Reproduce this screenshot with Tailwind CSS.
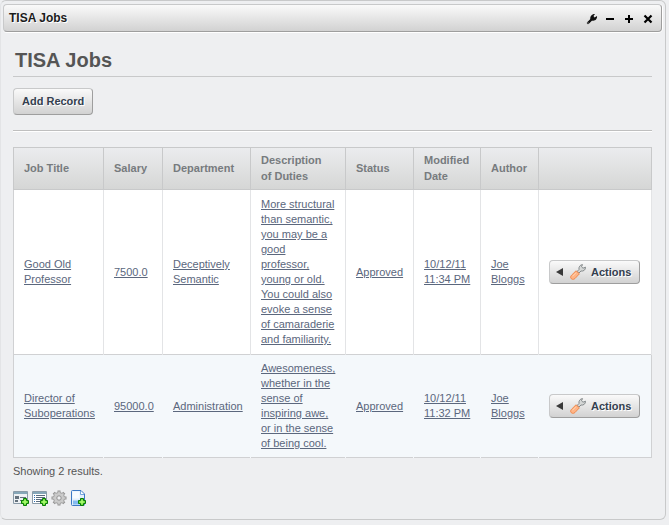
<!DOCTYPE html>
<html lang="en">
<head>
<meta charset="utf-8">
<meta name="viewport" content="width=device-width, initial-scale=1">
<title>TISA Jobs</title>
<script src="https://cdn.jsdelivr.net/npm/@tailwindcss/browser@4"></script>
</head>
<body class="bg-[#eeeff1] font-['Liberation_Sans',Arial,sans-serif] text-[11px] leading-[15px] text-[#555]">

<!-- Shared drawing for the two Actions buttons -->
<svg class="hidden" aria-hidden="true">
  <symbol id="spanner" viewBox="0 0 16 16">
    <path d="M7 7.500 9 5.500C8.500 3 10 .8 12.500 .6L11.500 2.800 13 4.200 15.500 3.200C15.500 6 13.500 7.500 11 7L9 9z" fill="#d5d7d6" stroke="#858a8c" stroke-width="1"/>
    <path d="M6 6.800 9.400 9.800 5 14.500C3.500 16 .8 15.500 .6 13.300 .6 12.400 1 11.800 1.600 11.200z" fill="#ffb485" stroke="#ef8b50" stroke-width="1"/>
    <path d="M6 8.800 2.500 12.300" stroke="#ffd3b0" stroke-width="1"/>
  </symbol>
  <symbol id="plus" viewBox="0 0 8 8">
    <path d="M2.500 .5h3v2h2v3h-2v2h-3v-2h-2v-3h2z" fill="#6fe03c" stroke="#087a06"/>
    <path d="M4 2v4M2 4h4" stroke="#b8ff7c"/>
  </symbol>
</svg>

<main class="mr-[3px] rounded-md border border-[#c8c9ca] border-l-[#e3e4e6] pb-[13px]">
  <header class="mx-[2px] mr-[3px] mt-[3px] flex h-[28px] items-center justify-between rounded border border-[#c8c9ca] border-r-[#9e9e9e] border-b-[#9e9e9e] bg-linear-to-b from-[#fafafa] to-[#d2d2d2] pl-[5px] pr-[5px] shadow-[0_1px_0_#fff,1px_0_0_#fff]">
    <h2 class="text-[12px] font-bold text-[#1b1b1b] [text-shadow:1px_1px_#fff]">TISA Jobs</h2>
    <div class="flex gap-[3px]">
      <button type="button" aria-label="Configuration" class="size-4"><svg viewBox="0 0 16 16" class="size-4"><path d="M5 13 9.500 8.500" stroke="#111" stroke-width="2.400" stroke-linecap="round"/><path d="M7.500 9.500C6.500 6.500 9 3.800 12 4L10.500 6 11.500 7.500 14 6C14.500 9 12 11.500 9 10.500z" fill="#111"/><path d="M4.500 13h1" stroke="#ccc"/></svg></button>
      <button type="button" aria-label="Minimize" class="size-4"><svg viewBox="0 0 16 16" class="size-4"><path d="M4 9h8" stroke="#000" stroke-width="2"/></svg></button>
      <button type="button" aria-label="Maximize" class="size-4"><svg viewBox="0 0 16 16" class="size-4"><path d="M4 9h8M8 5v8" stroke="#000" stroke-width="2"/></svg></button>
      <button type="button" aria-label="Remove" class="size-4"><svg viewBox="0 0 16 16" class="size-4"><path d="M4.500 5.500l7 7M11.500 5.500l-7 7" stroke="#000" stroke-width="2.200"/></svg></button>
    </div>
  </header>

  <div class="pl-[12px] pr-[13px]">
    <h1 class="mt-[15px] border-b border-[#c8c9ca] px-[2px] pb-[3px] text-[20px] font-bold leading-[26px] text-[#555]">TISA Jobs</h1>

    <button type="button" class="mt-[11px] block h-[27px] rounded border border-[#c8c9ca] border-r-[#9e9e9e] border-b-[#9e9e9e] bg-linear-to-b from-[#fafafa] to-[#d2d2d2] px-2 font-bold text-[#34404f] [text-shadow:1px_1px_#fff]">Add Record</button>

    <hr class="mt-[15px] border-[#bfbfbf] shadow-[0_1px_#fff]">

    <table class="mt-[16px] w-full table-fixed border-collapse border border-[#d0d1d3] bg-white text-left">
      <colgroup>
        <col class="w-[90px]"><col class="w-[59px]"><col class="w-[88px]"><col class="w-[95px]"><col class="w-[68px]"><col class="w-[67px]"><col class="w-[58px]"><col>
      </colgroup>
      <thead class="bg-linear-to-b from-[#ebecee] to-[#d5d6d5] leading-[16px] text-[#777b7e] [&_th]:border [&_th]:border-[#c8c9ca] [&_th]:pt-[4px] [&_th]:pb-[5px] [&_th]:pl-[10px]">
        <tr>
          <th scope="col">Job Title</th>
          <th scope="col">Salary</th>
          <th scope="col">Department</th>
          <th scope="col">Description<br>of Duties</th>
          <th scope="col">Status</th>
          <th scope="col">Modified<br>Date</th>
          <th scope="col">Author</th>
          <th scope="col" aria-label="Actions"></th>
        </tr>
      </thead>
      <tbody class="text-[#5b677d] [&_a]:underline [&_td]:pl-[10px]">
        <tr class="[&_td]:border-r [&_td]:border-[#e3e4e6] [&_td]:py-[7px]">
          <td><a href="#">Good Old<br>Professor</a></td>
          <td><a href="#">7500.0</a></td>
          <td><a href="#">Deceptively<br>Semantic</a></td>
          <td><a href="#">More structural<br>than semantic,<br>you may be a<br>good<br>professor,<br>young or old.<br>You could also<br>evoke a sense<br>of camaraderie<br>and familiarity.</a></td>
          <td><a href="#">Approved</a></td>
          <td><a href="#">10/12/11<br>11:34 PM</a></td>
          <td><a href="#">Joe<br>Bloggs</a></td>
          <td><button type="button" class="flex h-[24px] items-center rounded border border-[#c8c9ca] border-r-[#9e9e9e] border-b-[#9e9e9e] bg-linear-to-b from-[#fafafa] to-[#d2d2d2] pl-[6px] pr-2 font-bold text-[#34404f] [text-shadow:1px_1px_#fff]"><svg viewBox="0 0 7 8" class="mr-[7px] h-2 w-[7px]"><path d="M0 4 7 0v8z" fill="#3a3a3a"/></svg><svg class="mr-[5px] size-4"><use href="#spanner"/></svg>Actions</button></td>
        </tr>
        <tr class="border-t border-[#d0d1d3] bg-[#f4f8fb] [&_td]:border-r [&_td]:border-r-[#f4f8fb] [&_td:last-child]:border-r-[#d0d1d3] [&_td]:py-[6px]">
          <td><a href="#">Director of<br>Suboperations</a></td>
          <td><a href="#">95000.0</a></td>
          <td><a href="#">Administration</a></td>
          <td><a href="#">Awesomeness,<br>whether in the<br>sense of<br>inspiring awe,<br>or in the sense<br>of being cool.</a></td>
          <td><a href="#">Approved</a></td>
          <td><a href="#">10/12/11<br>11:32 PM</a></td>
          <td><a href="#">Joe<br>Bloggs</a></td>
          <td><button type="button" class="flex h-[24px] items-center rounded border border-[#c8c9ca] border-r-[#9e9e9e] border-b-[#9e9e9e] bg-linear-to-b from-[#fafafa] to-[#d2d2d2] pl-[6px] pr-2 font-bold text-[#34404f] [text-shadow:1px_1px_#fff]"><svg viewBox="0 0 7 8" class="mr-[7px] h-2 w-[7px]"><path d="M0 4 7 0v8z" fill="#3a3a3a"/></svg><svg class="mr-[5px] size-4"><use href="#spanner"/></svg>Actions</button></td>
        </tr>
      </tbody>
    </table>

    <p class="mt-[6px]">Showing 2 results.</p>

    <nav class="mt-[11px] flex gap-[3px]">
      <a href="#" aria-label="Add form" class="size-4"><svg viewBox="0 0 16 16" class="size-4"><path d="M.5 1.500h14v12H.5z" fill="#eef1f4" stroke="#8b9ba8"/><path d="M1 2h13v2H1z" fill="#86a7b8"/><path d="M2 6h4v3H2zM2 10h3v2H2z" fill="#65727d"/><path d="M7 7.500h6M7 10.500h2" stroke="#65727d"/><use href="#plus" x="8" y="8" width="8" height="8"/></svg></a>
      <a href="#" aria-label="Add list" class="size-4"><svg viewBox="0 0 16 16" class="size-4"><path d="M.5 1.500h14v12H.5z" fill="#fff" stroke="#8b9ba8"/><path d="M1 2h13v2H1z" fill="#86a7b8"/><path d="M2 5.500h1M2 7.500h1M2 9.500h1M2 11.500h1" stroke="#2d6fb5"/><path d="M4 5.500h9M4 7.500h9M4 9.500h7M4 11.500h5" stroke="#596b7d"/><use href="#plus" x="8" y="8" width="8" height="8"/></svg></a>
      <a href="#" aria-label="Manage" class="size-4"><svg viewBox="0 0 16 16" class="size-4"><path d="M8 .5v15M.5 8h15M2.700 2.700l10.600 10.600M13.300 2.700 2.700 13.300" stroke="#929292" stroke-width="3"/><circle cx="8" cy="8" r="5.500" fill="#c9c9c9" stroke="#a0a0a0"/><path d="M8 1.500v3M8 11.500v3M1.500 8h3M11.500 8h3M3.500 3.500l2 2M10.500 10.500l2 2M12.500 3.500l-2 2M5.500 10.500l-2 2" stroke="#ccc" stroke-width="1.500"/><circle cx="8" cy="8" r="2.200" fill="#eeeff1" stroke="#929292"/></svg></a>
      <a href="#" aria-label="Add document" class="size-4"><svg viewBox="0 0 16 16" class="size-4"><path d="M1.500 1.500Q1.500 .5 2.500 .5H11L14.500 4V14.500Q14.500 15.500 13.500 15.500H2.500Q1.500 15.500 1.500 14.500z" fill="#e3effc" stroke="#3c78c4"/><path d="M2.500 1.500h7v7h-7z" fill="#f7fbff"/><path d="M10.500 1v3.500H14" fill="#fff" stroke="#75a5dd"/><path d="M3 11.500h6M3 13.500h7" stroke="#83bbf0" stroke-width="2"/><use href="#plus" x="8" y="8" width="8" height="8"/></svg></a>
    </nav>
  </div>
</main>
</body>
</html>
